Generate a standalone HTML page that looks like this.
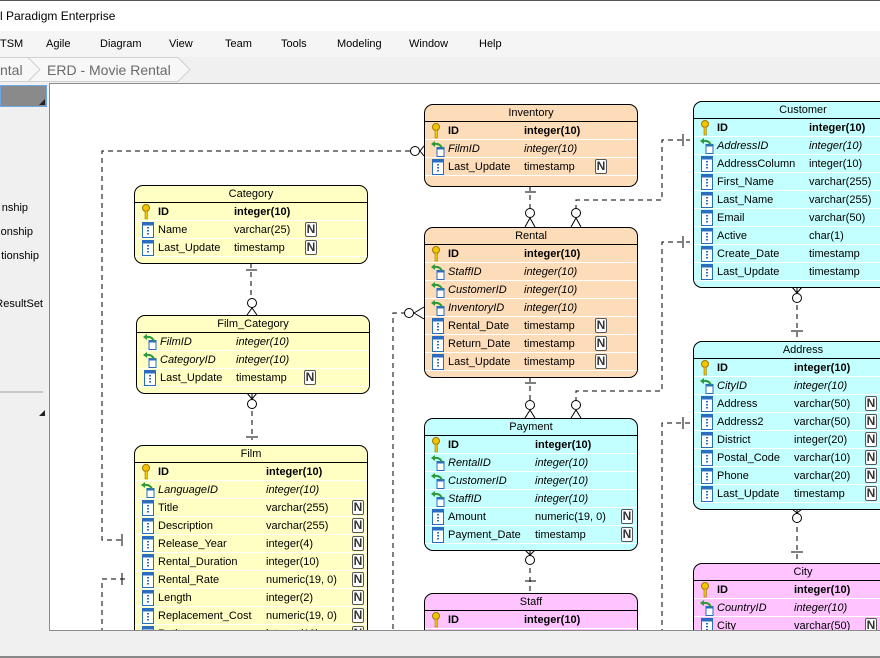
<!DOCTYPE html>
<html style="overflow:hidden"><head><meta charset="utf-8"><style>
*{margin:0;padding:0;box-sizing:border-box}
html,body{width:880px;height:658px;overflow:hidden}
body{background:#f0f0f0;font-family:"Liberation Sans",Arial,sans-serif;font-size:11px;color:#000;position:relative}
.abs{position:absolute}
#title{left:0;top:0;width:880px;height:31px;background:#fff;border-top:1px solid #555}
#title span{position:absolute;left:0;top:8px;font-size:12px}
#menu{left:0;top:31px;width:880px;height:26px;background:#f5f5f5}
#menu span{position:absolute;top:7px;font-size:11px}
#crumb{left:0;top:57px;width:880px;height:26px;background:#f0f0f0}
#crumb span{position:absolute;top:5px;font-size:14px;color:#6a6a6a}
#left{left:0;top:83px;width:49px;height:547px;background:#f0f0f0;overflow:hidden}
#left .it{position:absolute;font-size:11px;white-space:nowrap}
#canvas{left:49px;top:83px;width:831px;height:548px;background:#fff;border-left:1px solid #8a8a8a;border-top:1px solid #8a8a8a;border-bottom:1px solid #8a8a8a;overflow:hidden}
#inner{position:absolute;left:-50px;top:-84px;width:880px;height:658px}
.t{position:absolute;border:1px solid #000;border-radius:9px;overflow:hidden}
.h{height:17px;border-bottom:1px solid #000;text-align:center;line-height:17px;font-size:11px}
.r{position:relative;height:18px;border-bottom:1px solid #fff;line-height:19px;white-space:nowrap}
.r .n{position:absolute;left:23px}
.r .c{position:absolute}
.r svg{position:absolute;left:6px;top:1px}
.b{font-weight:bold}
.i{font-style:italic}
.N{position:absolute;top:1px;width:12px;height:15px;border:1.5px solid #555;border-radius:2px;background:#fff;font-weight:bold;font-size:12px;line-height:12px;text-align:center;color:#333}
.y{background:#ffffc4}.o{background:#fddcb9}.cy{background:#c4ffff}.p{background:#ffc4ff}
</style></head><body>
<svg width="0" height="0" style="position:absolute">
<defs>
<symbol id="key" viewBox="0 0 14 16"><circle cx="5" cy="4" r="3.5" fill="#f3c400" stroke="#a07800"/><rect x="4" y="7" width="2.4" height="8" fill="#f3c400" stroke="#a07800" stroke-width=".6"/></symbol>
<symbol id="col" viewBox="0 0 14 16"><rect x="1.5" y="0.5" width="11" height="15" fill="#fff" stroke="#2a6cc0"/><rect x="1.5" y="0.5" width="11" height="3" fill="#2a6cc0"/><rect x="6" y="5" width="2" height="1.5" fill="#2a6cc0"/><rect x="6" y="8" width="2" height="1.5" fill="#2a6cc0"/><rect x="6" y="11" width="2" height="1.5" fill="#2a6cc0"/></symbol>
<symbol id="fk" viewBox="0 0 14 16"><rect x="6" y="6.5" width="7" height="9" fill="#fff" stroke="#2a6cc0"/><rect x="6" y="6.5" width="7" height="2" fill="#2a6cc0"/><path d="M11 7 Q9 2 3 3" fill="none" stroke="#2a9a3a" stroke-width="2"/><path d="M0 3 L4 0 L4 6 Z" fill="#2a9a3a"/></symbol>
</defs></svg>

<div id="title" class="abs"><span>l Paradigm Enterprise</span></div>
<div id="menu" class="abs">
<span style="left:0">TSM</span><span style="left:46px">Agile</span><span style="left:100px">Diagram</span><span style="left:169px">View</span><span style="left:225px">Team</span><span style="left:281px">Tools</span><span style="left:337px">Modeling</span><span style="left:409px">Window</span><span style="left:479px">Help</span>
</div>
<div id="crumb" class="abs">
<svg class="abs" style="left:0;top:0" width="200" height="26"><path d="M0 0.5 H178 L190 12.5 L178 24.5 H0" fill="#f7f7f7" stroke="#d0d0d0"/><path d="M28 0.5 L40 12.5 L28 24.5" fill="none" stroke="#d0d0d0"/></svg>
<span style="left:0">ntal</span><span style="left:47px">ERD - Movie Rental</span>
</div>
<div id="left" class="abs">
<div class="abs" style="left:0;top:2px;width:47px;height:22px;background:#8a8a8a;border:1px solid #6ea6e6"></div>
<div class="abs" style="left:39px;top:16px;width:0;height:0;border-left:6px solid transparent;border-bottom:6px solid #222"></div>
<div class="it" style="right:21px;top:119px">nship</div>
<div class="it" style="right:16px;top:143px">onship</div>
<div class="it" style="right:10px;top:167px">tionship</div>
<div class="it" style="right:6px;top:215px">ResultSet</div>
<div class="abs" style="left:0;top:308px;width:43px;height:2px;background:#c8c8c8"></div>
<div class="abs" style="left:39px;top:327px;width:0;height:0;border-left:6px solid transparent;border-bottom:6px solid #222"></div>
</div>

<div id="canvas" class="abs"><div id="inner">
<svg class="abs" style="left:0;top:0" width="880" height="658">
<g fill="none" stroke="#000" stroke-dasharray="5,4">
<path d="M410 151 H102 V540 H125"/>
<path d="M125 579 H102 V660"/>
<path d="M406 313 H393 V660"/>
<path d="M251 263 V300"/><path d="M252 393 V440"/>
<path d="M530 186 V212"/><path d="M576 210 V200 H662 V140 H690"/>
<path d="M576 402 V391 H662 V242 H690"/>
<path d="M530 377 V404"/><path d="M797 287 V341"/>
<path d="M690 423 H662 V660"/>
<path d="M797 509 V563"/><path d="M530 550 V593"/>
</g>
<g fill="#fff" stroke="#000">
<circle cx="415" cy="151" r="4.5"/><circle cx="409" cy="313" r="4.5"/>
<circle cx="252" cy="303" r="4.5"/><circle cx="252" cy="404" r="4.5"/>
<circle cx="530" cy="213" r="4.5"/><circle cx="576" cy="213" r="4.5"/>
<circle cx="530" cy="405" r="4.5"/><circle cx="576" cy="405" r="4.5"/>
<circle cx="797" cy="298" r="4.5"/><circle cx="797" cy="518" r="4.5"/><circle cx="530" cy="560" r="4.5"/>
</g>
<g fill="none" stroke="#000">
<path d="M420 151 L424 146 M420 151 L424 156"/><path d="M414 313 L424 307 M414 313 L424 319"/>
<path d="M252 308 L247 315 M252 308 L257 315"/><path d="M252 399 L247 393 M252 399 L257 393"/>
<path d="M530 218 L525 227 M530 218 L535 227"/><path d="M576 218 L571 227 M576 218 L581 227"/>
<path d="M530 410 L525 418 M530 410 L535 418"/><path d="M576 410 L571 418 M576 410 L581 418"/>
<path d="M797 293 L792 287 M797 293 L802 287"/><path d="M797 513 L792 509 M797 513 L802 509"/><path d="M530 555 L525 550 M530 555 L535 550"/>
<path d="M246 270 H257 M525 192 H536 M525 383 H536 M791 331 H803 M791 552 H803 M525 581 H536 M246 437 H258"/>
<path d="M683 134 V146 M683 236 V248 M683 417 V429 M122 534 V546 M122 573 V585"/>
</g>
</svg>

<div class="t o" style="left:424px;top:104px;width:214px;height:83px"><div class="h">Inventory</div>
<div class="r"><svg width="14" height="16"><use href="#key"/></svg><span class="n b">ID</span><span class="c b" style="left:99px">integer(10)</span></div>
<div class="r"><svg width="14" height="16"><use href="#fk"/></svg><span class="n i">FilmID</span><span class="c i" style="left:99px">integer(10)</span></div>
<div class="r"><svg width="14" height="16"><use href="#col"/></svg><span class="n">Last_Update</span><span class="c" style="left:99px">timestamp</span><span class="N" style="left:170px">N</span></div>
</div>

<div class="t y" style="left:134px;top:185px;width:234px;height:79px"><div class="h">Category</div>
<div class="r"><svg width="14" height="16"><use href="#key"/></svg><span class="n b">ID</span><span class="c b" style="left:99px">integer(10)</span></div>
<div class="r"><svg width="14" height="16"><use href="#col"/></svg><span class="n">Name</span><span class="c" style="left:99px">varchar(25)</span><span class="N" style="left:170px">N</span></div>
<div class="r"><svg width="14" height="16"><use href="#col"/></svg><span class="n">Last_Update</span><span class="c" style="left:99px">timestamp</span><span class="N" style="left:170px">N</span></div>
</div>

<div class="t y" style="left:136px;top:315px;width:234px;height:79px"><div class="h">Film_Category</div>
<div class="r"><svg width="14" height="16"><use href="#fk"/></svg><span class="n i">FilmID</span><span class="c i" style="left:99px">integer(10)</span></div>
<div class="r"><svg width="14" height="16"><use href="#fk"/></svg><span class="n i">CategoryID</span><span class="c i" style="left:99px">integer(10)</span></div>
<div class="r"><svg width="14" height="16"><use href="#col"/></svg><span class="n">Last_Update</span><span class="c" style="left:99px">timestamp</span><span class="N" style="left:167px">N</span></div>
</div>

<div class="t y" style="left:134px;top:445px;width:234px;height:230px"><div class="h">Film</div>
<div class="r"><svg width="14" height="16"><use href="#key"/></svg><span class="n b">ID</span><span class="c b" style="left:131px">integer(10)</span></div>
<div class="r"><svg width="14" height="16"><use href="#fk"/></svg><span class="n i">LanguageID</span><span class="c i" style="left:131px">integer(10)</span></div>
<div class="r"><svg width="14" height="16"><use href="#col"/></svg><span class="n">Title</span><span class="c" style="left:131px">varchar(255)</span><span class="N" style="left:217px">N</span></div>
<div class="r"><svg width="14" height="16"><use href="#col"/></svg><span class="n">Description</span><span class="c" style="left:131px">varchar(255)</span><span class="N" style="left:217px">N</span></div>
<div class="r"><svg width="14" height="16"><use href="#col"/></svg><span class="n">Release_Year</span><span class="c" style="left:131px">integer(4)</span><span class="N" style="left:217px">N</span></div>
<div class="r"><svg width="14" height="16"><use href="#col"/></svg><span class="n">Rental_Duration</span><span class="c" style="left:131px">integer(10)</span><span class="N" style="left:217px">N</span></div>
<div class="r"><svg width="14" height="16"><use href="#col"/></svg><span class="n">Rental_Rate</span><span class="c" style="left:131px">numeric(19, 0)</span><span class="N" style="left:217px">N</span></div>
<div class="r"><svg width="14" height="16"><use href="#col"/></svg><span class="n">Length</span><span class="c" style="left:131px">integer(2)</span><span class="N" style="left:217px">N</span></div>
<div class="r"><svg width="14" height="16"><use href="#col"/></svg><span class="n">Replacement_Cost</span><span class="c" style="left:131px">numeric(19, 0)</span><span class="N" style="left:217px">N</span></div>
<div class="r"><svg width="14" height="16"><use href="#col"/></svg><span class="n">Rating</span><span class="c" style="left:131px">integer(10)</span><span class="N" style="left:217px">N</span></div>
</div>

<div class="t o" style="left:424px;top:227px;width:214px;height:151px"><div class="h">Rental</div>
<div class="r"><svg width="14" height="16"><use href="#key"/></svg><span class="n b">ID</span><span class="c b" style="left:99px">integer(10)</span></div>
<div class="r"><svg width="14" height="16"><use href="#fk"/></svg><span class="n i">StaffID</span><span class="c i" style="left:99px">integer(10)</span></div>
<div class="r"><svg width="14" height="16"><use href="#fk"/></svg><span class="n i">CustomerID</span><span class="c i" style="left:99px">integer(10)</span></div>
<div class="r"><svg width="14" height="16"><use href="#fk"/></svg><span class="n i">InventoryID</span><span class="c i" style="left:99px">integer(10)</span></div>
<div class="r"><svg width="14" height="16"><use href="#col"/></svg><span class="n">Rental_Date</span><span class="c" style="left:99px">timestamp</span><span class="N" style="left:170px">N</span></div>
<div class="r"><svg width="14" height="16"><use href="#col"/></svg><span class="n">Return_Date</span><span class="c" style="left:99px">timestamp</span><span class="N" style="left:170px">N</span></div>
<div class="r"><svg width="14" height="16"><use href="#col"/></svg><span class="n">Last_Update</span><span class="c" style="left:99px">timestamp</span><span class="N" style="left:170px">N</span></div>
</div>

<div class="t cy" style="left:424px;top:418px;width:214px;height:133px"><div class="h">Payment</div>
<div class="r"><svg width="14" height="16"><use href="#key"/></svg><span class="n b">ID</span><span class="c b" style="left:110px">integer(10)</span></div>
<div class="r"><svg width="14" height="16"><use href="#fk"/></svg><span class="n i">RentalID</span><span class="c i" style="left:110px">integer(10)</span></div>
<div class="r"><svg width="14" height="16"><use href="#fk"/></svg><span class="n i">CustomerID</span><span class="c i" style="left:110px">integer(10)</span></div>
<div class="r"><svg width="14" height="16"><use href="#fk"/></svg><span class="n i">StaffID</span><span class="c i" style="left:110px">integer(10)</span></div>
<div class="r"><svg width="14" height="16"><use href="#col"/></svg><span class="n">Amount</span><span class="c" style="left:110px">numeric(19, 0)</span><span class="N" style="left:196px">N</span></div>
<div class="r"><svg width="14" height="16"><use href="#col"/></svg><span class="n">Payment_Date</span><span class="c" style="left:110px">timestamp</span><span class="N" style="left:196px">N</span></div>
</div>

<div class="t p" style="left:424px;top:593px;width:214px;height:100px"><div class="h">Staff</div>
<div class="r"><svg width="14" height="16"><use href="#key"/></svg><span class="n b">ID</span><span class="c b" style="left:99px">integer(10)</span></div>
<div class="r"><svg width="14" height="16"><use href="#fk"/></svg><span class="n i">AddressID</span><span class="c i" style="left:99px">integer(10)</span></div>
</div>

<div class="t cy" style="left:693px;top:101px;width:220px;height:187px"><div class="h">Customer</div>
<div class="r"><svg width="14" height="16"><use href="#key"/></svg><span class="n b">ID</span><span class="c b" style="left:115px">integer(10)</span></div>
<div class="r"><svg width="14" height="16"><use href="#fk"/></svg><span class="n i">AddressID</span><span class="c i" style="left:115px">integer(10)</span></div>
<div class="r"><svg width="14" height="16"><use href="#col"/></svg><span class="n">AddressColumn</span><span class="c" style="left:115px">integer(10)</span></div>
<div class="r"><svg width="14" height="16"><use href="#col"/></svg><span class="n">First_Name</span><span class="c" style="left:115px">varchar(255)</span></div>
<div class="r"><svg width="14" height="16"><use href="#col"/></svg><span class="n">Last_Name</span><span class="c" style="left:115px">varchar(255)</span></div>
<div class="r"><svg width="14" height="16"><use href="#col"/></svg><span class="n">Email</span><span class="c" style="left:115px">varchar(50)</span></div>
<div class="r"><svg width="14" height="16"><use href="#col"/></svg><span class="n">Active</span><span class="c" style="left:115px">char(1)</span></div>
<div class="r"><svg width="14" height="16"><use href="#col"/></svg><span class="n">Create_Date</span><span class="c" style="left:115px">timestamp</span></div>
<div class="r"><svg width="14" height="16"><use href="#col"/></svg><span class="n">Last_Update</span><span class="c" style="left:115px">timestamp</span></div>
</div>

<div class="t cy" style="left:693px;top:341px;width:220px;height:169px"><div class="h">Address</div>
<div class="r"><svg width="14" height="16"><use href="#key"/></svg><span class="n b">ID</span><span class="c b" style="left:100px">integer(10)</span></div>
<div class="r"><svg width="14" height="16"><use href="#fk"/></svg><span class="n i">CityID</span><span class="c i" style="left:100px">integer(10)</span></div>
<div class="r"><svg width="14" height="16"><use href="#col"/></svg><span class="n">Address</span><span class="c" style="left:100px">varchar(50)</span><span class="N" style="left:171px">N</span></div>
<div class="r"><svg width="14" height="16"><use href="#col"/></svg><span class="n">Address2</span><span class="c" style="left:100px">varchar(50)</span><span class="N" style="left:171px">N</span></div>
<div class="r"><svg width="14" height="16"><use href="#col"/></svg><span class="n">District</span><span class="c" style="left:100px">integer(20)</span><span class="N" style="left:171px">N</span></div>
<div class="r"><svg width="14" height="16"><use href="#col"/></svg><span class="n">Postal_Code</span><span class="c" style="left:100px">varchar(10)</span><span class="N" style="left:171px">N</span></div>
<div class="r"><svg width="14" height="16"><use href="#col"/></svg><span class="n">Phone</span><span class="c" style="left:100px">varchar(20)</span><span class="N" style="left:171px">N</span></div>
<div class="r"><svg width="14" height="16"><use href="#col"/></svg><span class="n">Last_Update</span><span class="c" style="left:100px">timestamp</span><span class="N" style="left:171px">N</span></div>
</div>

<div class="t p" style="left:693px;top:563px;width:220px;height:120px"><div class="h">City</div>
<div class="r"><svg width="14" height="16"><use href="#key"/></svg><span class="n b">ID</span><span class="c b" style="left:100px">integer(10)</span></div>
<div class="r"><svg width="14" height="16"><use href="#fk"/></svg><span class="n i">CountryID</span><span class="c i" style="left:100px">integer(10)</span></div>
<div class="r"><svg width="14" height="16"><use href="#col"/></svg><span class="n">City</span><span class="c" style="left:100px">varchar(50)</span><span class="N" style="left:171px">N</span></div>
</div>
</div></div>
<div class="abs" style="left:0;top:656px;width:880px;height:2px;background:#888"></div>
</body></html>
